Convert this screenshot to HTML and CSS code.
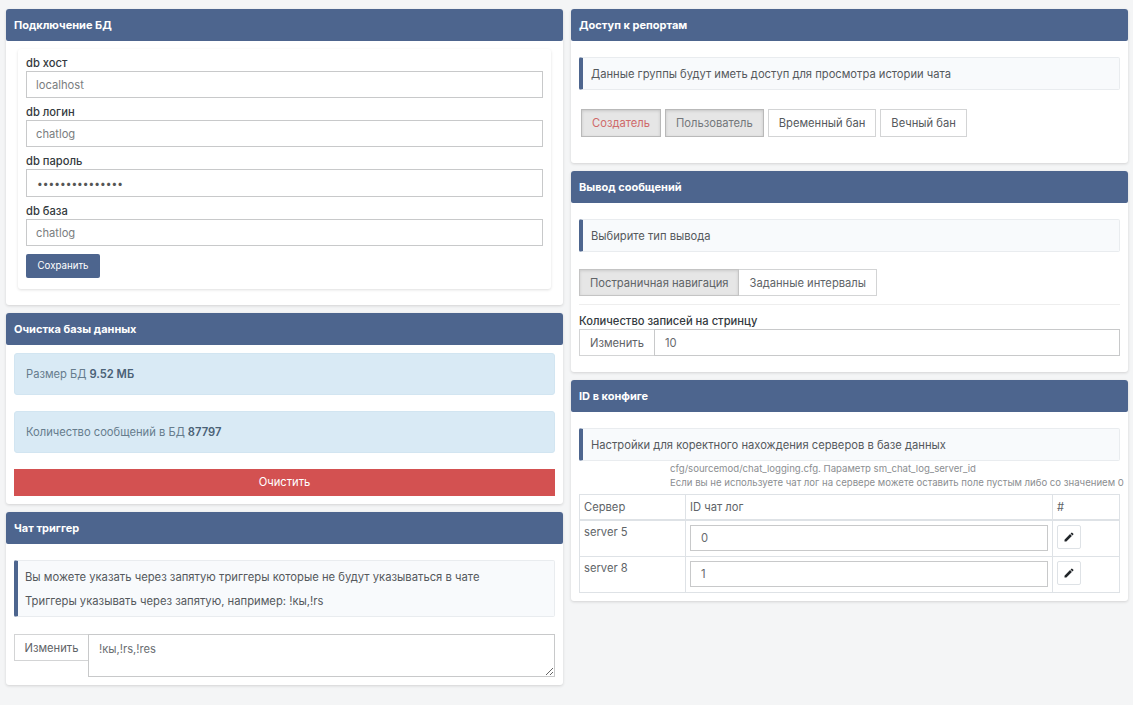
FILE: index.html
```html
<!DOCTYPE html>
<html lang="ru">
<head>
<meta charset="utf-8">
<title>Настройки</title>
<link rel="stylesheet" href="styles.css">
</head>
<body>
<div class="page">
  <div class="col">
    <section class="card">
      <h2 class="head">Подключение БД</h2>
      <div class="body-db">
        <form class="inner">
          <label class="lbl">db хост</label>
          <input class="inp inp-muted" type="text" value="localhost">
          <label class="lbl">db логин</label>
          <input class="inp inp-muted" type="text" value="chatlog">
          <label class="lbl">db пароль</label>
          <input class="inp inp-pass" type="password" value="aaaaaaaaaaaaaaa">
          <label class="lbl lbl-last">db база</label>
          <input class="inp inp-muted" type="text" value="chatlog">
          <button class="btn-save" type="button">Сохранить</button>
        </form>
      </div>
    </section>

    <section class="card">
      <h2 class="head">Очистка базы данных</h2>
      <div class="body-clean">
        <div class="alert">Размер БД <b>9.52 МБ</b></div>
        <div class="alert">Количество сообщений в БД <b>87797</b></div>
        <button class="btn-danger" type="button">Очистить</button>
      </div>
    </section>

    <section class="card">
      <h2 class="head">Чат триггер</h2>
      <div class="body">
        <div class="callout callout-tall">
          <p>Вы можете указать через запятую триггеры которые не будут указываться в чате</p>
          <p>Триггеры указывать через запятую, например: !кы,!rs</p>
        </div>
        <div class="group group-ta">
          <button class="addon addon-ta" type="button">Изменить</button>
          <textarea class="ta">!кы,!rs,!res</textarea>
        </div>
      </div>
    </section>
  </div>

  <div class="col">
    <section class="card">
      <h2 class="head">Доступ к репортам</h2>
      <div class="body body-reports">
        <div class="callout">Данные группы будут иметь доступ для просмотра истории чата</div>
        <div class="chips">
          <button class="chip chip-on chip-red" type="button">Создатель</button>
          <button class="chip chip-on" type="button">Пользователь</button>
          <button class="chip" type="button">Временный бан</button>
          <button class="chip" type="button">Вечный бан</button>
        </div>
      </div>
    </section>

    <section class="card">
      <h2 class="head">Вывод сообщений</h2>
      <div class="body body-output">
        <div class="callout">Выбирите тип вывода</div>
        <div class="seg">
          <button class="seg-btn seg-on" type="button">Постраничная навигация</button>
          <button class="seg-btn seg-off" type="button">Заданные интервалы</button>
        </div>
        <hr class="rule">
        <label class="lbl lbl-count">Количество записей на стринцу</label>
        <div class="group">
          <button class="addon" type="button">Изменить</button>
          <input class="inp inp-group" type="text" value="10">
        </div>
      </div>
    </section>

    <section class="card">
      <h2 class="head">ID в конфиге</h2>
      <div class="body body-config">
        <div class="callout">Настройки для коректного нахождения серверов в базе данных</div>
        <div class="note">
          <div>cfg/sourcemod/chat_logging.cfg. Параметр sm_chat_log_server_id</div>
          <div>Если вы не используете чат лог на сервере можете оставить поле пустым либо со значением 0</div>
        </div>
        <table class="tbl">
          <colgroup><col class="c1"><col class="c2"><col class="c3"></colgroup>
          <thead>
            <tr><th>Сервер</th><th>ID чат лог</th><th>#</th></tr>
          </thead>
          <tbody>
            <tr>
              <td>server 5</td>
              <td><input class="inp inp-cell" type="text" value="0"></td>
              <td><button class="edit" type="button" aria-label="edit"><svg viewBox="0 0 24 24" width="12" height="12"><path fill="#212529" d="M3 17.25V21h3.75L17.81 9.94l-3.75-3.75L3 17.25zM20.71 7.04a1 1 0 0 0 0-1.41l-2.34-2.34a1 1 0 0 0-1.41 0l-1.83 1.83 3.75 3.75 1.83-1.83z"/></svg></button></td>
            </tr>
            <tr>
              <td>server 8</td>
              <td><input class="inp inp-cell" type="text" value="1"></td>
              <td><button class="edit" type="button" aria-label="edit"><svg viewBox="0 0 24 24" width="12" height="12"><path fill="#212529" d="M3 17.25V21h3.75L17.81 9.94l-3.75-3.75L3 17.25zM20.71 7.04a1 1 0 0 0 0-1.41l-2.34-2.34a1 1 0 0 0-1.41 0l-1.83 1.83 3.75 3.75 1.83-1.83z"/></svg></button></td>
            </tr>
          </tbody>
        </table>
      </div>
    </section>
  </div>
</div>
</body>
</html>
```
FILE: styles.css
```css
* { box-sizing: border-box; }
html, body { margin: 0; height: 100%; }
body {
  background: #f4f5f6;
  color: #3f4347;
  font: 11.2px/1.5 Inter, "Noto Sans", sans-serif;
  overflow: hidden;
}
button, input, textarea { font: inherit; }
.page {
  display: grid;
  grid-template-columns: 557px 557px;
  column-gap: 8px;
  padding: 9px 0 0 6px;
  align-items: start;
}
.col { display: flex; flex-direction: column; gap: 8px; }
.card {
  background: #fff;
  border-radius: 3px;
  box-shadow: 0 1px 3px rgba(0, 0, 0, .14);
}
.head {
  margin: 0;
  height: 32px;
  padding: 0 8px;
  background: #4d658e;
  border-radius: 3px 3px 2px 2px;
  color: #fff;
  font-size: 11px;
  font-weight: 700;
  line-height: 32px;
}
.body { padding: 16px 8px 8px; }
.body-db { padding: 8px 12px 16px; }
.inner {
  display: flex;
  flex-direction: column;
  align-items: flex-start;
  height: 240px;
  padding: 6px 8px 0;
  border-radius: 3px;
  box-shadow: 0 1px 3px rgba(0, 0, 0, .13);
}
.lbl {
  display: block;
  height: 16px;
  color: #343a40;
  font-size: 11.2px;
  font-weight: 500;
  line-height: 16px;
}
.inp {
  display: block;
  width: 100%;
  height: 27px;
  padding: 0 10px;
  background: #fff;
  border: 1px solid #c8c9ca;
  border-radius: 0;
  color: #66696d;
  outline: 0;
}
.inner .inp { margin-bottom: 6px; padding-left: 9px; }
.inner .inp-pass { height: 28px; color: #555; font-size: 10.2px; padding-left: 10px; }
.inp-muted { color: #7a7d80; }
.btn-save {
  width: 74px;
  height: 24px;
  margin-top: 2px;
  padding: 0;
  background: #4d658e;
  border: 0;
  border-radius: 2px;
  color: #fff;
  font-size: 9.7px;
}
.body-clean { padding: 8px; }
.alert {
  display: flex;
  align-items: center;
  gap: 3px;
  height: 42px;
  margin-bottom: 16px;
  padding: 0 11px;
  background: #d9eaf5;
  border: 1px solid #d2e5f1;
  border-radius: 3px;
  color: #667c8d;
}
.alert b { color: #4a6176; font-weight: 600; }
.btn-danger {
  display: block;
  width: 100%;
  height: 27px;
  padding: 0;
  background: #d35151;
  border: 0;
  color: #fff;
}
.callout {
  height: 33px;
  padding: 0 8px;
  background: #f8fafc;
  border: 1px solid #e9ecef;
  border-left: 4px solid #4d658e;
  border-radius: 2px;
  color: #55595d;
  line-height: 33px;
}
.callout-tall { height: 57px; padding: 8px 7px 0; line-height: 16px; font-size: 11.25px; }
.callout p { margin: 0 0 8px; }
.group { display: flex; align-items: flex-start; }
.group-ta { margin-top: 17px; }
.addon {
  flex: none;
  width: 75px;
  height: 27px;
  padding: 1px 0 0;
  background: #fff;
  border: 1px solid #d3d4d5;
  border-right: 0;
  color: #5f6367;
}
.addon-ta { width: 74px; }
.ta {
  display: block;
  flex: 1;
  height: 43px;
  padding: 6px 10px;
  border: 1px solid #c8c9ca;
  border-radius: 0;
  color: #6a6e72;
  outline: 0;
}
.body-reports { height: 122px; }
.chips { display: flex; gap: 4px; margin: 19px 0 0 2px; }
.chip {
  height: 28px;
  padding: 1px 10px 0;
  background: #fff;
  border: 1px solid #d3d4d5;
  color: #55595d;
}
.chip-on {
  background: #e6e6e6;
  border-color: #b9b9b9;
  box-shadow: inset 0 1px 3px rgba(0, 0, 0, .14);
  color: #73777b;
}
.chip-red { color: #cf6a6a; }
.body-output { height: 169px; }
.seg { display: flex; margin-top: 17px; }
.seg-btn {
  height: 27px;
  padding: 1px 10px 0;
  background: #fff;
  border: 1px solid #d3d4d5;
  color: #606468;
}
.seg-on {
  background: #e6e6e6;
  border-color: #c4c4c4;
  box-shadow: inset 0 1px 3px rgba(0, 0, 0, .12);
}
.seg-off { border-left: 0; }
.rule { margin: 8px 0 0; border: 0; border-top: 1px solid #eee; }
.lbl-count { margin-top: 8px; }
.inp-group { flex: 1; }
.body-config { height: 189px; }
.note {
  margin: 0 0 4px 91px;
  padding-top: 1px;
  color: #8b8e91;
  font-size: 9.6px;
  line-height: 14px;
  white-space: nowrap;
}
.tbl {
  width: 541px;
  border-collapse: collapse;
  table-layout: fixed;
}
.c1 { width: 106px; }
.c3 { width: 67px; }
.tbl th, .tbl td {
  padding: 4px;
  border: 1px solid #dee2e6;
  color: #606468;
  font-weight: 400;
  text-align: left;
  vertical-align: top;
}
.tbl th { height: 25px; border-bottom-width: 2px; line-height: 16px; }
.tbl td { height: 36px; line-height: 15px; }
.inp-cell { width: 358px; height: 26px; }
.edit {
  display: flex;
  align-items: center;
  justify-content: center;
  width: 24px;
  height: 24px;
  padding: 0;
  background: #fff;
  border: 1px solid #dee2e6;
  border-radius: 2px;
}
```
